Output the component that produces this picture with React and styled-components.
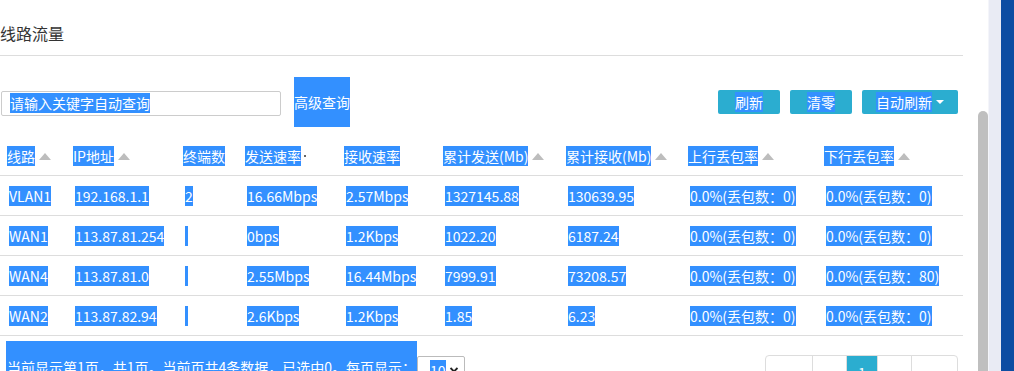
import React from 'react';
import styled, { createGlobalStyle } from 'styled-components';

const SEL = '#3390ff';
const TEAL = '#2badd0';

const GlobalStyle = createGlobalStyle`
  html, body {
    margin: 0;
    padding: 0;
    overflow: hidden;
    background: #fff;
  }
  body {
    font-family: "Noto Sans CJK SC", "Microsoft YaHei", sans-serif;
    font-size: 14px;
    color: #333;
  }
`;

const Page = styled.div`
  display: flex;
  height: 371px;
  overflow: hidden;
`;

const Main = styled.div`
  flex: 0 0 977px;
  box-sizing: border-box;
  padding-right: 14px;
`;

const Title = styled.div`
  padding: 22px 0 11px;
  font-size: 16px;
  line-height: 22px;
  color: #333;
  border-bottom: 1px solid #ddd;
`;

const Toolbar = styled.div`
  display: flex;
  align-items: center;
  height: 50px;
  margin-top: 21px;
`;

const SearchBox = styled.div`
  box-sizing: border-box;
  width: 280px;
  height: 25px;
  margin: 2px 0 0 1px;
  padding-left: 8px;
  border: 1px solid #ccc;
  border-radius: 2px;
  display: flex;
  align-items: center;
`;

const Sel = styled.span`
  background: ${SEL};
  color: #fff;
  white-space: pre;
`;

const AdvancedBtn = styled.button`
  width: 56px;
  height: 50px;
  margin-left: 13px;
  padding: 0;
  border: none;
  background: ${SEL};
  color: #fff;
  font: inherit;
  font-size: 14px;
`;

const Actions = styled.div`
  display: flex;
  gap: 10px;
  margin-left: auto;
  margin-right: 5px;
`;

const ActionBtn = styled.button`
  width: ${(p) => p.$w}px;
  height: 24px;
  padding: 0;
  border: none;
  border-radius: 2px;
  background: ${TEAL};
  color: #fff;
  font: inherit;
  font-size: 14px;
  display: flex;
  align-items: center;
  justify-content: center;
`;

const Caret = styled.span`
  display: inline-block;
  margin-left: 4px;
  border-left: 4px solid transparent;
  border-right: 4px solid transparent;
  border-top: 4px solid #fff;
`;

const Table = styled.table`
  width: 963px;
  margin-top: 9px;
  table-layout: fixed;
  border-collapse: collapse;
`;

const Th = styled.th`
  height: 39px;
  padding: 0 0 0 7px;
  text-align: left;
  font-weight: normal;
  white-space: nowrap;
  border-bottom: 1px solid #ddd;
`;

const Td = styled.td`
  height: 39px;
  padding: 0 0 0 9px;
  white-space: nowrap;
  border-bottom: 1px solid #ddd;
`;

const SortArrow = styled.span`
  display: inline-block;
  vertical-align: middle;
  margin: -2px 0 0 4px;
  border-left: 6px solid transparent;
  border-right: 6px solid transparent;
  border-bottom: 7px solid #bdbdbd;
`;

const Dot = styled.span`
  display: inline-block;
  vertical-align: middle;
  width: 2px;
  height: 2px;
  margin: -4px 0 0 3px;
  background: #666;
`;

const Footer = styled.div`
  display: flex;
  align-items: flex-start;
`;

const Info = styled.div`
  box-sizing: border-box;
  width: 411px;
  height: 60px;
  margin: 5px 0 0 6px;
  padding: 16px 0 0 1px;
  background: ${SEL};
  color: #fff;
  line-height: 20px;
  white-space: nowrap;
`;

const PageSize = styled.div`
  box-sizing: border-box;
  width: 48px;
  height: 28px;
  margin-top: 20px;
  padding-left: 12px;
  border: 1px solid #bbb;
  border-radius: 2px;
  display: flex;
  align-items: center;
  gap: 3px;
`;

const Pager = styled.div`
  display: flex;
  margin: 19px 5px 0 auto;
`;

const PageCell = styled.div`
  box-sizing: border-box;
  width: ${(p) => p.$w}px;
  height: 34px;
  margin-left: -1px;
  border: 1px solid #ddd;
  background: ${(p) => (p.$active ? TEAL : '#fff')};
  color: ${(p) => (p.$active ? '#fff' : '#555')};
  display: flex;
  align-items: center;
  justify-content: center;
  &:first-child {
    border-radius: 4px 0 0 4px;
  }
  &:last-child {
    border-radius: 0 4px 4px 0;
  }
`;

const ScrollTrack = styled.div`
  flex: 0 0 11px;
  box-sizing: border-box;
  padding: 111px 0 0 1px;
  display: flex;
  background: #fff;
`;

const Thumb = styled.div`
  flex: 1;
  background: #bfbfbf;
  border-radius: 5px 5px 0 0;
`;

const LightStrip = styled.div`
  flex: 0 0 13px;
  background: #e9ebf4;
  border-left: 1px solid #f4f5fa;
  box-sizing: border-box;
`;

const BlueStrip = styled.div`
  flex: 0 0 13px;
  background: #0c4da2;
`;

const columns = [
  { key: 'line', label: '线路', w: 66, sort: true },
  { key: 'ip', label: 'IP地址', w: 110, sort: true },
  { key: 'term', label: '终端数', w: 62 },
  { key: 'tx', label: '发送速率', w: 99, dot: true },
  { key: 'rx', label: '接收速率', w: 99 },
  { key: 'txTotal', label: '累计发送(Mb)', w: 123, sort: true },
  { key: 'rxTotal', label: '累计接收(Mb)', w: 122, sort: true },
  { key: 'upLoss', label: '上行丢包率', w: 136, sort: true },
  { key: 'downLoss', label: '下行丢包率', w: 146, sort: true },
];

const rows = [
  { line: 'VLAN1', ip: '192.168.1.1', term: '2', tx: '16.66Mbps', rx: '2.57Mbps', txTotal: '1327145.88', rxTotal: '130639.95', upLoss: '0.0%(丢包数：0)', downLoss: '0.0%(丢包数：0)' },
  { line: 'WAN1', ip: '113.87.81.254', term: '\u00a0', tx: '0bps', rx: '1.2Kbps', txTotal: '1022.20', rxTotal: '6187.24', upLoss: '0.0%(丢包数：0)', downLoss: '0.0%(丢包数：0)' },
  { line: 'WAN4', ip: '113.87.81.0', term: '\u00a0', tx: '2.55Mbps', rx: '16.44Mbps', txTotal: '7999.91', rxTotal: '73208.57', upLoss: '0.0%(丢包数：0)', downLoss: '0.0%(丢包数：80)' },
  { line: 'WAN2', ip: '113.87.82.94', term: '\u00a0', tx: '2.6Kbps', rx: '1.2Kbps', txTotal: '1.85', rxTotal: '6.23', upLoss: '0.0%(丢包数：0)', downLoss: '0.0%(丢包数：0)' },
];

const pages = [
  { label: '«', w: 48 },
  { label: '‹', w: 35 },
  { label: '1', w: 32, active: true },
  { label: '›', w: 35 },
  { label: '»', w: 47 },
];

export default function App() {
  return (
    <>
      <GlobalStyle />
      <Page>
        <Main>
          <Title>线路流量</Title>
          <Toolbar>
            <SearchBox>
              <Sel>请输入关键字自动查询</Sel>
            </SearchBox>
            <AdvancedBtn>高级查询</AdvancedBtn>
            <Actions>
              <ActionBtn $w={62}><Sel>刷新</Sel></ActionBtn>
              <ActionBtn $w={62}><Sel>清零</Sel></ActionBtn>
              <ActionBtn $w={96}><Sel>自动刷新</Sel><Caret /></ActionBtn>
            </Actions>
          </Toolbar>
          <Table>
            <colgroup>
              {columns.map((c) => (
                <col key={c.key} style={{ width: c.w }} />
              ))}
            </colgroup>
            <thead>
              <tr>
                {columns.map((c) => (
                  <Th key={c.key}>
                    <Sel>{c.label}</Sel>
                    {c.sort && <SortArrow />}
                    {c.dot && <Dot />}
                  </Th>
                ))}
              </tr>
            </thead>
            <tbody>
              {rows.map((r) => (
                <tr key={r.line}>
                  {columns.map((c) => (
                    <Td key={c.key}>
                      <Sel>{r[c.key]}</Sel>
                    </Td>
                  ))}
                </tr>
              ))}
            </tbody>
          </Table>
          <Footer>
            <Info>当前显示第1页，共1页。当前页共4条数据，已选中0。每页显示：</Info>
            <PageSize>
              <Sel>10</Sel>
              <svg width="10" height="8" viewBox="0 0 10 8">
                <path d="M1.5 2 L5 5.5 L8.5 2" fill="none" stroke="#222" strokeWidth="1.8" />
              </svg>
            </PageSize>
            <Pager>
              {pages.map((p, i) => (
                <PageCell key={i} $w={p.w} $active={p.active}>{p.label}</PageCell>
              ))}
            </Pager>
          </Footer>
        </Main>
        <ScrollTrack>
          <Thumb />
        </ScrollTrack>
        <LightStrip />
        <BlueStrip />
      </Page>
    </>
  );
}
